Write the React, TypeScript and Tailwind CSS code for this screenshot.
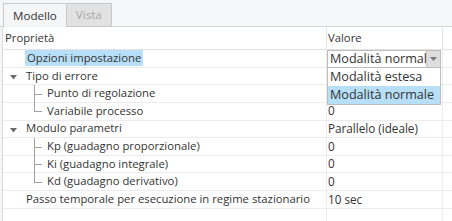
import React from "react";

const font = { fontFamily: '"Open Sans", "Noto Sans", sans-serif' };

type Row = {
  label: string;
  value?: string;
  level: 0 | 1;
  expander?: boolean;
  branch?: "mid" | "last";
  highlight?: boolean;
};

const rows: Row[] = [
  { label: "Opzioni impostazione", level: 0, highlight: true },
  { label: "Tipo di errore", level: 0, expander: true },
  { label: "Punto di regolazione", level: 1, branch: "mid" },
  { label: "Variabile processo", value: "0", level: 1, branch: "last" },
  { label: "Modulo parametri", value: "Parallelo (ideale)", level: 0, expander: true },
  { label: "Kp (guadagno proporzionale)", value: "0", level: 1, branch: "mid" },
  { label: "Ki (guadagno integrale)", value: "0", level: 1, branch: "mid" },
  { label: "Kd (guadagno derivativo)", value: "0", level: 1, branch: "last" },
  { label: "Passo temporale per esecuzione in regime stazionario", value: "10 sec", level: 0 },
];

function TreeCell({ r }: { r: Row }) {
  return (
    <div className="relative flex h-full items-center">
      {r.expander && (
        <svg className="absolute left-[7px] top-[7px]" width="7" height="5" viewBox="0 0 7 5">
          <path d="M0 0 L7 0 L3.5 4.5 Z" fill="#6b6b6b" />
        </svg>
      )}
      {r.branch && (
        <>
          <div
            className={
              r.branch === "mid"
                ? "absolute left-[31px] top-0 h-[calc(100%+1px)] w-px bg-[#a0a0a0]"
                : "absolute left-[31px] top-0 h-1/2 w-px bg-[#a0a0a0]"
            }
          />
          <div className="absolute left-[31px] top-1/2 h-px w-[8px] bg-[#a0a0a0]" />
        </>
      )}
      <span
        className={
          "whitespace-nowrap " +
          (r.level === 1 ? "ml-[43px] " : "ml-[22px] ") +
          (r.highlight ? "bg-[#b7dff7] px-[2px] leading-[16px]" : "px-[1px]")
        }
      >
        {r.label}
      </span>
    </div>
  );
}

export default function App() {
  return (
    <div
      className="relative h-[221px] w-[452px] overflow-hidden bg-[#f4f6f7] text-[11.3px] text-[#333333]"
      style={font}
    >
      {/* tabs */}
      <div className="flex h-[27px] items-end border-b border-[#d4d6d8] pl-[3px]">
        <div className="-mb-px flex h-[24px] items-center border border-b-0 border-[#c8c8c8] bg-[#f4f6f7] px-[9px] text-[11.6px] text-[#333]">
          Modello
        </div>
        <div className="-mb-px flex h-[24px] items-center border border-l-0 border-[#c8c8c8] bg-[#e2e2e2] px-[9px] text-[11.6px] text-[#a8a8a8]">
          Vista
        </div>
      </div>

      {/* table */}
      <div className="ml-[2px] h-[194px] border-l border-[#d9d9d9] bg-white">
        <div className="flex h-[23px] border-b border-[#e3e3e3]">
          <div className="flex w-[324px] items-center border-r border-[#e3e3e3] pl-[2px]">Proprietà</div>
          <div className="flex w-[116px] items-center border-r border-[#e3e3e3] pl-[1px]">Valore</div>
          <div className="flex-1" />
        </div>
        {rows.map((r, i) => (
          <div key={i} className="flex h-[17.65px] border-b border-[#ececec]">
            <div className="w-[324px] border-r border-[#ececec]">
              <TreeCell r={r} />
            </div>
            <div className="flex w-[116px] items-center border-r border-[#ececec] pl-[1px] text-[11.7px]">
              {r.value}
            </div>
            <div className="flex-1" />
          </div>
        ))}
        <div className="flex h-[20px]">
          <div className="w-[324px] border-r border-[#ececec]" />
          <div className="w-[116px] border-r border-[#ececec]" />
        </div>
      </div>

      {/* combo box */}
      <div className="absolute left-[327px] top-[50px] flex h-[18px] w-[114px] border border-[#bdbdbd] bg-white text-[12.6px]">
        <div className="flex-1 overflow-hidden whitespace-nowrap pl-[2px] leading-[16px]">Modalità normale</div>
        <div className="flex w-[14px] items-center justify-center border-l border-[#c8c8c8] bg-[#dedede]">
          <svg width="7" height="4" viewBox="0 0 7 4">
            <path d="M0 0 L7 0 L3.5 4 Z" fill="#7a7a7a" />
          </svg>
        </div>
      </div>

      {/* dropdown list */}
      <div className="absolute left-[327px] top-[68px] flex w-[114px] flex-col border border-t-0 border-[#bdbdbd] bg-white text-[12.6px]">
        <div className="flex h-[18px] items-center pl-[2px]">Modalità estesa</div>
        <div className="flex h-[18px] items-center bg-[#b7dff7] pl-[2px]">Modalità normale</div>
      </div>
    </div>
  );
}
